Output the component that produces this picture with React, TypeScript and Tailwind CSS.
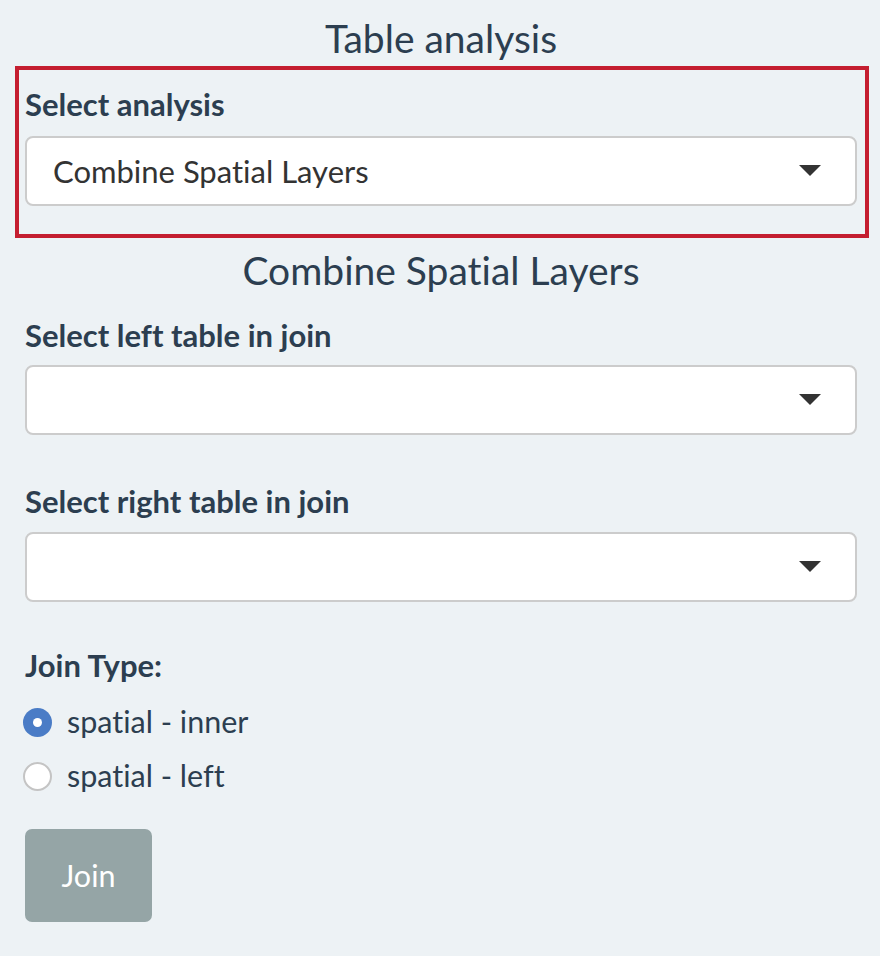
import { useState } from "react";

const Caret = () => (
  <svg width="22" height="12" viewBox="0 0 22 12" className="shrink-0">
    <path d="M0 0 L22 0 L11 11 Z" fill="#333333" />
  </svg>
);

const SelectBox = ({ value }: { value?: string }) => (
  <div className="h-[70px] w-full bg-white border-2 border-[#cccccc] rounded-[8px] flex items-center justify-between pl-[26px] pr-[34px]">
    <span className="text-[31px] text-[#333333]">{value ?? ""}</span>
    <Caret />
  </div>
);

const Label = ({ children }: { children: React.ReactNode }) => (
  <div className="text-[31px] font-bold text-[#2c3e50] leading-[36px]">{children}</div>
);

const Radio = ({ checked, label }: { checked: boolean; label: string }) => (
  <div className="flex items-center gap-[15px] h-[54px]">
    {checked ? (
      <div className="w-[29px] h-[29px] rounded-full bg-[#4a7cc6] flex items-center justify-center">
        <div className="w-[9px] h-[9px] rounded-full bg-white" />
      </div>
    ) : (
      <div className="w-[29px] h-[29px] rounded-full bg-white border-2 border-[#c4c4c4]" />
    )}
    <span className="text-[30.5px] text-[#2c3e50]">{label}</span>
  </div>
);

export default function App() {
  const [joinType] = useState("inner");

  return (
    <div
      className="w-[880px] h-[956px] bg-[#edf2f5] pl-[25px] pr-[23px] pt-[14px] [font-variant-ligatures:none]"
      style={{ fontFamily: "Lato, 'Open Sans', sans-serif" }}
    >
      {/* Title */}
      <h2 className="text-center text-[39px] text-[#2c3e50] leading-[48px]">Table analysis</h2>

      {/* Highlighted analysis picker */}
      <div className="mt-[4px] ml-[-10px] mr-[-12px] border-4 border-[#c41e30] pl-[6px] pr-[8px] pt-[16px] pb-[28px]">
        <Label>Select analysis</Label>
        <div className="mt-[14px]">
          <SelectBox value="Combine Spatial Layers" />
        </div>
      </div>

      <h3 className="text-center text-[39px] text-[#2c3e50] leading-[48px] mt-[8px]">
        Combine Spatial Layers
      </h3>

      <div className="mt-[23px]">
        <Label>Select left table in join</Label>
        <div className="mt-[12px]">
          <SelectBox />
        </div>
      </div>

      <div className="mt-[48px]">
        <Label>Select right table in join</Label>
        <div className="mt-[13px]">
          <SelectBox />
        </div>
      </div>

      <div className="mt-[45px]">
        <Label>Join Type:</Label>
        <div className="mt-[12px] ml-[-2px]">
          <Radio checked={joinType === "inner"} label="spatial - inner" />
          <Radio checked={joinType === "left"} label="spatial - left" />
        </div>
      </div>

      <button className="mt-[26px] w-[127px] h-[93px] bg-[#95a5a6] rounded-[7px] text-white text-[30.5px]">
        Join
      </button>
    </div>
  );
}
